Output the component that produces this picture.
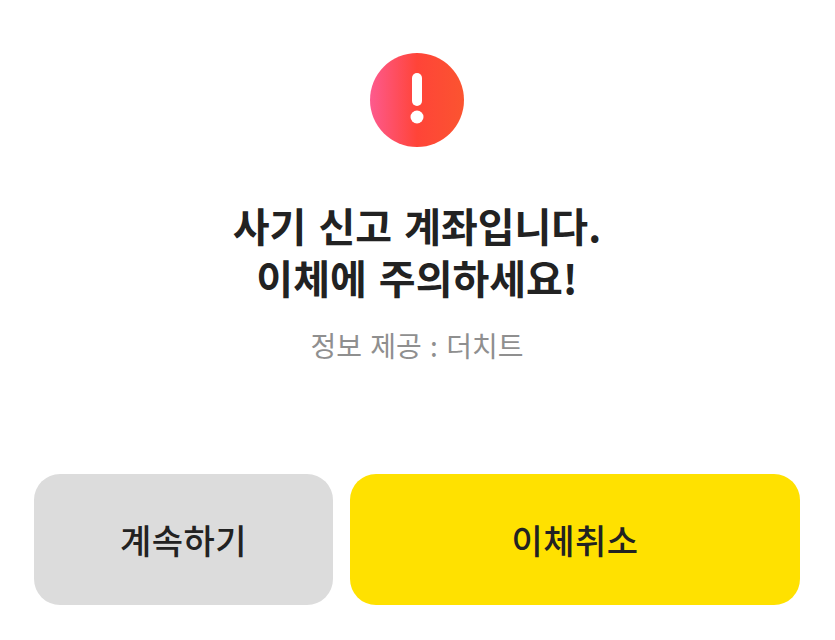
<div class="sheet">
  <svg class="alert-icon" width="94" height="94" viewBox="0 0 94 94" aria-hidden="true">
    <defs>
      <linearGradient id="alert-fill" x1="0" y1="0" x2="1" y2="0">
        <stop offset="0" stop-color="#fd5a8e" />
        <stop offset="0.5" stop-color="#ff4438" />
        <stop offset="1" stop-color="#fb5430" />
      </linearGradient>
    </defs>
    <circle cx="47" cy="47" r="47" fill="url(#alert-fill)" />
    <rect x="42" y="20" width="10" height="33" rx="5" fill="#fff" />
    <circle cx="47" cy="64" r="6.5" fill="#fff" />
  </svg>

  <h1 class="title">사기 신고 계좌입니다.<br />이체에 주의하세요!</h1>
  <p class="source">정보 제공 : 더치트</p>

  <div class="actions">
    <button class="btn continue">계속하기</button>
    <button class="btn cancel">이체취소</button>
  </div>
</div>

<style>
  :global(body) {
    background: #fff;
  }
  .sheet {
    width: 835px;
    height: 640px;
    box-sizing: border-box;
    padding: 53px 1px 0 0;
    display: flex;
    flex-direction: column;
    align-items: center;
    font-family: "Noto Sans CJK KR", "Noto Sans", sans-serif;
    overflow: hidden;
  }
  .alert-icon {
    display: block;
    flex: none;
  }
  .title {
    margin: 52px 0 0;
    text-align: center;
    font-size: 40px;
    font-weight: 700;
    line-height: 52px;
    word-spacing: 3px;
    color: #222;
  }
  .source {
    margin: 22px 0 0;
    font-size: 28px;
    line-height: 40px;
    word-spacing: 2px;
    color: #8f8f8f;
  }
  .actions {
    margin-top: 109px;
    display: flex;
    gap: 17px;
    width: 766px;
  }
  .btn {
    height: 131px;
    border: none;
    border-radius: 26px;
    padding: 0;
    font-family: inherit;
    font-size: 34px;
    font-weight: 500;
    letter-spacing: 0.5px;
    color: #222;
  }
  .continue {
    width: 299px;
    background: #dcdcdc;
  }
  .cancel {
    width: 450px;
    background: #ffe100;
  }
</style>
